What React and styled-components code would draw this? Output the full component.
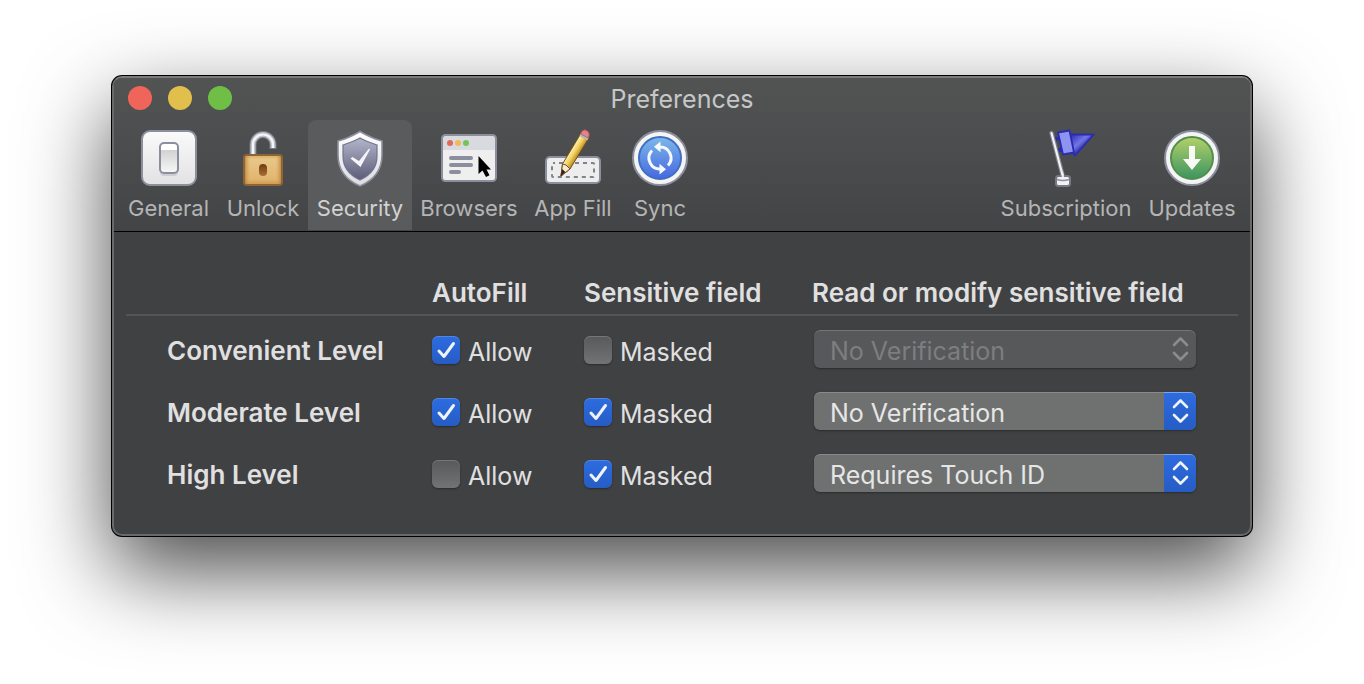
import React, { useState } from "react";
import styled, { createGlobalStyle, css } from "styled-components";

const GlobalStyle = createGlobalStyle`
  *, *::before, *::after { box-sizing: border-box; }
  body {
    margin: 0;
    background: #fff;
    color: #e0e0e0;
    font-family: Inter, "Liberation Sans", sans-serif;
  }
`;

const blueFill = css`
  background: linear-gradient(#2d6ce0, #265cc4);
`;

const Page = styled.main`
  padding: 76px 112px 148px;
`;

const Window = styled.section`
  border: 2px solid #68696a;
  border-top-color: #7a7b7b;
  border-radius: 10px;
  background: #404143;
  box-shadow: 0 0 0 1px #000, 0 34px 86px rgba(0, 0, 0, 0.72);
`;

const Header = styled.header`
  padding-bottom: 1px;
  border-bottom: 1px solid #000;
  border-radius: 8px 8px 0 0;
  background: linear-gradient(#525454, #434446);
`;

const TitleBar = styled.div`
  display: grid;
  grid-template-columns: 1fr auto 1fr;
  align-items: center;
  height: 40px;
  padding: 0 14px;
`;

const Lights = styled.div`
  display: flex;
  gap: 16px;
`;

const Light = styled.button`
  width: 24px;
  height: 24px;
  padding: 0;
  border: 0;
  border-radius: 50%;
  background: ${(p) => p.$color};
`;

const Title = styled.h1`
  margin: 0;
  padding-top: 2px;
  color: #c6c7c7;
  font-size: 25px;
  font-weight: 400;
  line-height: 32px;
`;

const Toolbar = styled.nav`
  display: flex;
  padding: 2px 6px 0 5px;
`;

const Spacer = styled.div`
  flex: 1;
`;

const Tool = styled.button`
  display: flex;
  flex-direction: column;
  align-items: center;
  gap: 6px;
  width: ${(p) => p.$width}px;
  height: 110px;
  padding: 8px 0 0;
  border: 0;
  border-radius: 8px 8px 0 0;
  background: ${(p) => (p.$active ? "#5a5b5c" : "transparent")};
  color: ${(p) => (p.$active ? "#d2d2d3" : "#b4b5b5")};
  font: 400 22px/28px Inter, "Liberation Sans", sans-serif;
  white-space: nowrap;

  svg { display: block; width: 60px; height: 60px; }
`;

const Content = styled.div`
  padding: 38px 12px 32px;
`;

const Table = styled.table`
  width: 100%;
  table-layout: fixed;
  border-collapse: separate;
  border-spacing: 0;
`;

const Col = styled.col`
  width: ${(p) => p.$width}px;
`;

const HeadCell = styled.th`
  height: 46px;
  padding: 2px 0 0;
  border-bottom: 2px solid #545556;
  font-size: 26px;
  font-weight: 600;
  line-height: 32px;
  text-align: left;
  white-space: nowrap;
`;

const RowHead = styled.th`
  padding: 8px 0 0 41px;
  font-size: 26px;
  font-weight: 600;
  line-height: 32px;
  text-align: left;
  white-space: nowrap;
`;

const Cell = styled.td`
  height: 62px;
  padding: 6px 0 0;
`;

const SelectCell = styled(Cell)`
  padding: 4px 42px 0 2px;
`;

const CheckLabel = styled.label`
  display: flex;
  align-items: center;
  gap: 8px;
`;

const CheckText = styled.span`
  padding-top: 4px;
  font-size: 25px;
  line-height: 32px;
`;

const CheckBox = styled.span`
  display: grid;

  > * { grid-area: 1 / 1; }
  svg { width: 28px; height: 28px; pointer-events: none; visibility: hidden; }
  input:checked + svg { visibility: visible; }
`;

const CheckInput = styled.input`
  appearance: none;
  width: 28px;
  height: 28px;
  margin: 0;
  border-radius: 6px;
  background: linear-gradient(#58595a, #727374);
  box-shadow: inset 0 1px 0 rgba(255, 255, 255, 0.18), 0 1px 2px rgba(0, 0, 0, 0.35);

  &:checked { ${blueFill} }
`;

const SelectBox = styled.span`
  display: grid;
  grid-template-columns: 1fr 32px;
  height: 38px;
  overflow: hidden;
  border-radius: 6px;
  background: ${(p) => (p.$disabled ? "#57585a" : "#6f7170")};
  box-shadow: 0 1px 2px rgba(0, 0, 0, 0.35);
`;

const SelectInput = styled.select`
  appearance: none;
  grid-area: 1 / 1 / 2 / 3;
  width: 100%;
  height: 38px;
  padding: 4px 40px 0 16px;
  border: 0;
  border-radius: 6px;
  background: transparent;
  box-shadow: inset 0 1px 0 rgba(255, 255, 255, 0.18);
  color: #e6e6e6;
  font: 400 25px/32px Inter, "Liberation Sans", sans-serif;

  &:disabled { color: #7d7e7f; opacity: 1; }
`;

const Arrows = styled.span`
  grid-area: 1 / 2;
  pointer-events: none;
  color: ${(p) => (p.$disabled ? "#8b8c8c" : "#eef3fc")};
  ${(p) => !p.$disabled && blueFill}
  box-shadow: ${(p) => (p.$disabled ? "none" : "inset 0 1px 0 rgba(255, 255, 255, 0.25)")};

  svg { display: block; }
`;

const GeneralIcon = () => (
  <svg viewBox="0 0 60 60" aria-hidden="true">
    <defs>
      <linearGradient id="plate" x2="0" y2="1"><stop stopColor="#fafafb" /><stop offset="1" stopColor="#e2e2e4" /></linearGradient>
      <linearGradient id="rocker" x2="0" y2="1"><stop stopColor="#fff" /><stop offset=".22" stopColor="#fff" /><stop offset=".24" stopColor="#d2d2d2" /><stop offset="1" stopColor="#f8f8f8" /></linearGradient>
    </defs>
    <rect x="3" y="3" width="54" height="54" rx="8" fill="url(#plate)" stroke="#8b8f9d" strokeWidth="2" />
    <rect x="21" y="17" width="18" height="31" rx="4" fill="#000" opacity=".1" />
    <rect x="21" y="15" width="18" height="30" rx="4" fill="url(#rocker)" stroke="#8b8f9d" strokeWidth="2" />
  </svg>
);

const UnlockIcon = () => (
  <svg viewBox="0 0 60 60" aria-hidden="true">
    <defs>
      <linearGradient id="brass" x2="0" y2="1"><stop stopColor="#d9ac66" /><stop offset=".15" stopColor="#e8c687" /><stop offset=".8" stopColor="#e2b670" /><stop offset="1" stopColor="#cc9650" /></linearGradient>
      <linearGradient id="brassSide"><stop stopColor="#b97f38" stopOpacity=".8" /><stop offset=".15" stopColor="#d9a860" stopOpacity="0" /><stop offset=".85" stopColor="#d9a860" stopOpacity="0" /><stop offset="1" stopColor="#b97f38" stopOpacity=".8" /></linearGradient>
      <linearGradient id="keyhole" x2="0" y2="1"><stop stopColor="#6d3b14" /><stop offset="1" stopColor="#a96f32" /></linearGradient>
    </defs>
    <path d="M20 28V16.500A10 10 0 0 1 40 16.500V21" fill="none" stroke="#777b86" strokeWidth="7" />
    <path d="M20 28V16.500A10 10 0 0 1 40 16.500V20" fill="none" stroke="#bfc1c8" strokeWidth="5" />
    <path d="M20 28V16.500A10 10 0 0 1 40 16.500V20" fill="none" stroke="#f6f6f9" strokeWidth="2.200" />
    <rect x="11" y="27" width="38" height="30" rx="3" fill="url(#brass)" stroke="#8e6532" strokeWidth="2" />
    <rect x="12" y="28" width="36" height="28" rx="2" fill="url(#brassSide)" />
    <rect x="26" y="36" width="8" height="12" rx="4" fill="url(#keyhole)" />
  </svg>
);

const SecurityIcon = () => (
  <svg viewBox="0 0 60 60" aria-hidden="true">
    <defs>
      <linearGradient id="shield" x2="0" y2="1"><stop stopColor="#b3b6ca" /><stop offset="1" stopColor="#5b5d78" /></linearGradient>
      <linearGradient id="rim" x2="0" y2="1"><stop stopColor="#fff" /><stop offset="1" stopColor="#dcdcdf" /></linearGradient>
    </defs>
    <path d="M30 3.500C36 7 44 11 52 13V27C52 41 44 52 30 58C16 52 8 41 8 27V13C16 11 24 7 30 3.500Z" fill="url(#rim)" stroke="#8b8f9d" strokeWidth="1.600" />
    <path d="M30 10C35 13 41 15 47 17V28C47 39 41 47 30 52C19 47 13 39 13 28V17C19 15 25 13 30 10Z" fill="url(#shield)" stroke="#6f7390" strokeWidth="1.200" />
    <path d="M20.500 30.500L22.500 29L29 33L39 20.500L40 21.500L30.500 39Z" fill="#f5f5f8" />
  </svg>
);

const BrowsersIcon = () => (
  <svg viewBox="0 0 60 60" aria-hidden="true">
    <rect x="3" y="7" width="54" height="46" rx="3.500" fill="#efeff0" />
    <path d="M3 22V11Q3 7 7 7H53Q57 7 57 11V22Z" fill="#d9dadf" />
    <rect x="3" y="7" width="54" height="46" rx="3.500" fill="none" stroke="#8b8f9d" strokeWidth="2" />
    <circle cx="11" cy="15" r="3" fill="#e0695e" />
    <circle cx="19" cy="15" r="3" fill="#f0ba58" />
    <circle cx="27" cy="15" r="3" fill="#75c35c" />
    <path d="M12 30H32M12 37H32M12 44H20" stroke="#8b8f9d" strokeWidth="4" strokeLinecap="round" />
    <path d="M39.500 28V46L43.500 42.500L47 49L50.500 47.300L47.500 41.500H52Z" fill="#000" />
  </svg>
);

const AppFillIcon = () => (
  <svg viewBox="0 0 60 60" aria-hidden="true">
    <defs>
      <linearGradient id="pencil" gradientUnits="userSpaceOnUse" x1="27" y1="23" x2="35" y2="28"><stop stopColor="#fdf3ae" /><stop offset=".5" stopColor="#f2cf60" /><stop offset="1" stopColor="#b98a1e" /></linearGradient>
    </defs>
    <rect x="3" y="29" width="54" height="26" rx="4" fill="#ededee" stroke="#8b8f9d" strokeWidth="2" />
    <rect x="9" y="35" width="42" height="14" rx="1" fill="none" stroke="#80838e" strokeWidth="2" strokeDasharray="4 4" strokeDashoffset="2" />
    <g stroke="#725019" strokeWidth="1">
      <path d="M37.500 6L45.500 10.500L27 41L18 48L19.500 36Z" fill="url(#pencil)" />
      <path d="M37.500 6Q39 1 43 2Q48 4 45.500 10.500Z" fill="#df858a" stroke="#9f494b" />
      <path d="M19.500 36L23 37L27 41L18 48Z" fill="#f6ead8" />
    </g>
    <path d="M36.500 8L44 12.500L45.500 10.500L37.500 6Z" fill="#b9b4b0" />
    <path d="M19 41L22.500 44L17.500 48.500Z" fill="#3a2419" />
  </svg>
);

const Disc = ({ id, from, to, edge, children }) => (
  <svg viewBox="0 0 60 60" aria-hidden="true">
    <defs>
      <linearGradient id={id} x2="0" y2="1"><stop stopColor={from} /><stop offset="1" stopColor={to} /></linearGradient>
    </defs>
    <circle cx="30" cy="30" r="27" fill="#f4f4f5" stroke="#8b8f9d" strokeWidth="2" />
    <circle cx="30" cy="30" r="21" fill={`url(#${id})`} stroke={edge} strokeWidth="2" />
    {children}
  </svg>
);

const SyncIcon = () => (
  <Disc id="syncDisc" from="#7cb8ea" to="#4668e0" edge="#3f6fc0">
    <path d="M29 19A11 11 0 0 1 38 37.500M31 41A11 11 0 0 1 22 22.500" fill="none" stroke="#f6f9ff" strokeWidth="3" />
    <path d="M24 18.800L30.500 13.500V24.300ZM36 41.200L29.500 35.700V46.500Z" fill="#f6f9ff" />
  </Disc>
);

const UpdatesIcon = () => (
  <Disc id="updateDisc" from="#b4d06a" to="#3c9560" edge="#528f4c">
    <path d="M27 18H33V31H39L30 42L21 31H27Z" fill="#f8faf6" />
  </Disc>
);

const SubscriptionIcon = () => (
  <svg viewBox="0 0 60 60" aria-hidden="true">
    <defs>
      <linearGradient id="pennant" x2="1" y2="1"><stop offset=".1" stopColor="#3a3cc0" /><stop offset=".4" stopColor="#7376e2" /><stop offset=".6" stopColor="#2b2db4" /></linearGradient>
    </defs>
    <path d="M18 9.500L24 8.500V12L19 13ZM21 20.500L26 19.500V23.500L22 24.500Z" fill="#2a2cae" />
    <path d="M34 6.500L57.500 6.700L39 27.500L36 24Z" fill="url(#pennant)" stroke="#2a2cae" strokeWidth="1.800" />
    <path d="M22 4.500L33.500 2.500L38 24.500L27 26.500Z" fill="#8d93ef" stroke="#2a2cae" strokeWidth="1.800" strokeLinejoin="round" />
    <path d="M15.500 5L26.500 47" stroke="#7b8189" strokeWidth="4.500" strokeLinecap="round" />
    <path d="M15.500 5L26.500 47" stroke="#f1f1f2" strokeWidth="2.200" strokeLinecap="round" />
    <rect x="20" y="48" width="14" height="10" rx="2.500" fill="#f2f2f4" stroke="#747b86" strokeWidth="2" />
    <path d="M21 51.500Q27 53.500 33 51.500" fill="none" stroke="#8b929c" strokeWidth="1.500" />
    <path d="M26 44L27 49" stroke="#f1f1f2" strokeWidth="2.200" />
  </svg>
);

const leftTools = [
  { name: "General", Icon: GeneralIcon, width: 99 },
  { name: "Unlock", Icon: UnlockIcon, width: 90 },
  { name: "Security", Icon: SecurityIcon, width: 104 },
  { name: "Browsers", Icon: BrowsersIcon, width: 114 },
  { name: "App Fill", Icon: AppFillIcon, width: 94 },
  { name: "Sync", Icon: SyncIcon, width: 80 },
];
const rightTools = [
  { name: "Subscription", Icon: SubscriptionIcon, width: 148 },
  { name: "Updates", Icon: UpdatesIcon, width: 104 },
];

const levels = [
  { name: "Convenient Level", allow: true, masked: false, verify: "No Verification", locked: true },
  { name: "Moderate Level", allow: true, masked: true, verify: "No Verification" },
  { name: "High Level", allow: false, masked: true, verify: "Requires Touch ID" },
];

function Check({ label, initial }) {
  return (
    <CheckLabel>
      <CheckBox>
        <CheckInput type="checkbox" defaultChecked={initial} />
        <svg viewBox="0 0 28 28" aria-hidden="true">
          <path d="M7 15L12 20.500L21.500 7.500" fill="none" stroke="#eef3fc" strokeWidth="3" strokeLinecap="round" strokeLinejoin="round" />
        </svg>
      </CheckBox>
      <CheckText>{label}</CheckText>
    </CheckLabel>
  );
}

function Verification({ level }) {
  return (
    <SelectBox $disabled={level.locked}>
      <Arrows $disabled={level.locked}>
        <svg width="32" height="38" viewBox="0 0 32 38" aria-hidden="true">
          <path d="M10 15L16.500 8.500L23 15M10 23L16.500 29.500L23 23" fill="none" stroke="currentColor" strokeWidth="2.600" strokeLinecap="round" strokeLinejoin="round" />
        </svg>
      </Arrows>
      <SelectInput
        aria-label={`Read or modify sensitive field, ${level.name}`}
        defaultValue={level.verify}
        disabled={level.locked}
      >
        <option>No Verification</option>
        <option>Requires Touch ID</option>
      </SelectInput>
    </SelectBox>
  );
}

export default function App() {
  const [active, setActive] = useState("Security");
  const renderTool = ({ name, Icon, width }) => (
    <Tool key={name} type="button" $width={width} $active={name === active} onClick={() => setActive(name)}>
      <Icon />
      {name}
    </Tool>
  );

  return (
    <Page>
      <GlobalStyle />
      <Window>
        <Header>
          <TitleBar>
            <Lights>
              <Light type="button" aria-label="Close" $color="#f0655a" />
              <Light type="button" aria-label="Minimize" $color="#e1bf4c" />
              <Light type="button" aria-label="Zoom" $color="#6fbf47" />
            </Lights>
            <Title>Preferences</Title>
          </TitleBar>
          <Toolbar aria-label="Preference panes">
            {leftTools.map(renderTool)}
            <Spacer />
            {rightTools.map(renderTool)}
          </Toolbar>
        </Header>
        <Content>
          <Table>
            <colgroup>
              <Col $width={306} />
              <Col $width={152} />
              <Col $width={228} />
              <col />
            </colgroup>
            <thead>
              <tr>
                <HeadCell as="td" />
                <HeadCell scope="col">AutoFill</HeadCell>
                <HeadCell scope="col">Sensitive field</HeadCell>
                <HeadCell scope="col">Read or modify sensitive field</HeadCell>
              </tr>
            </thead>
            <tbody>
              {levels.map((level) => (
                <tr key={level.name}>
                  <RowHead scope="row">{level.name}</RowHead>
                  <Cell><Check label="Allow" initial={level.allow} /></Cell>
                  <Cell><Check label="Masked" initial={level.masked} /></Cell>
                  <SelectCell><Verification level={level} /></SelectCell>
                </tr>
              ))}
            </tbody>
          </Table>
        </Content>
      </Window>
    </Page>
  );
}
